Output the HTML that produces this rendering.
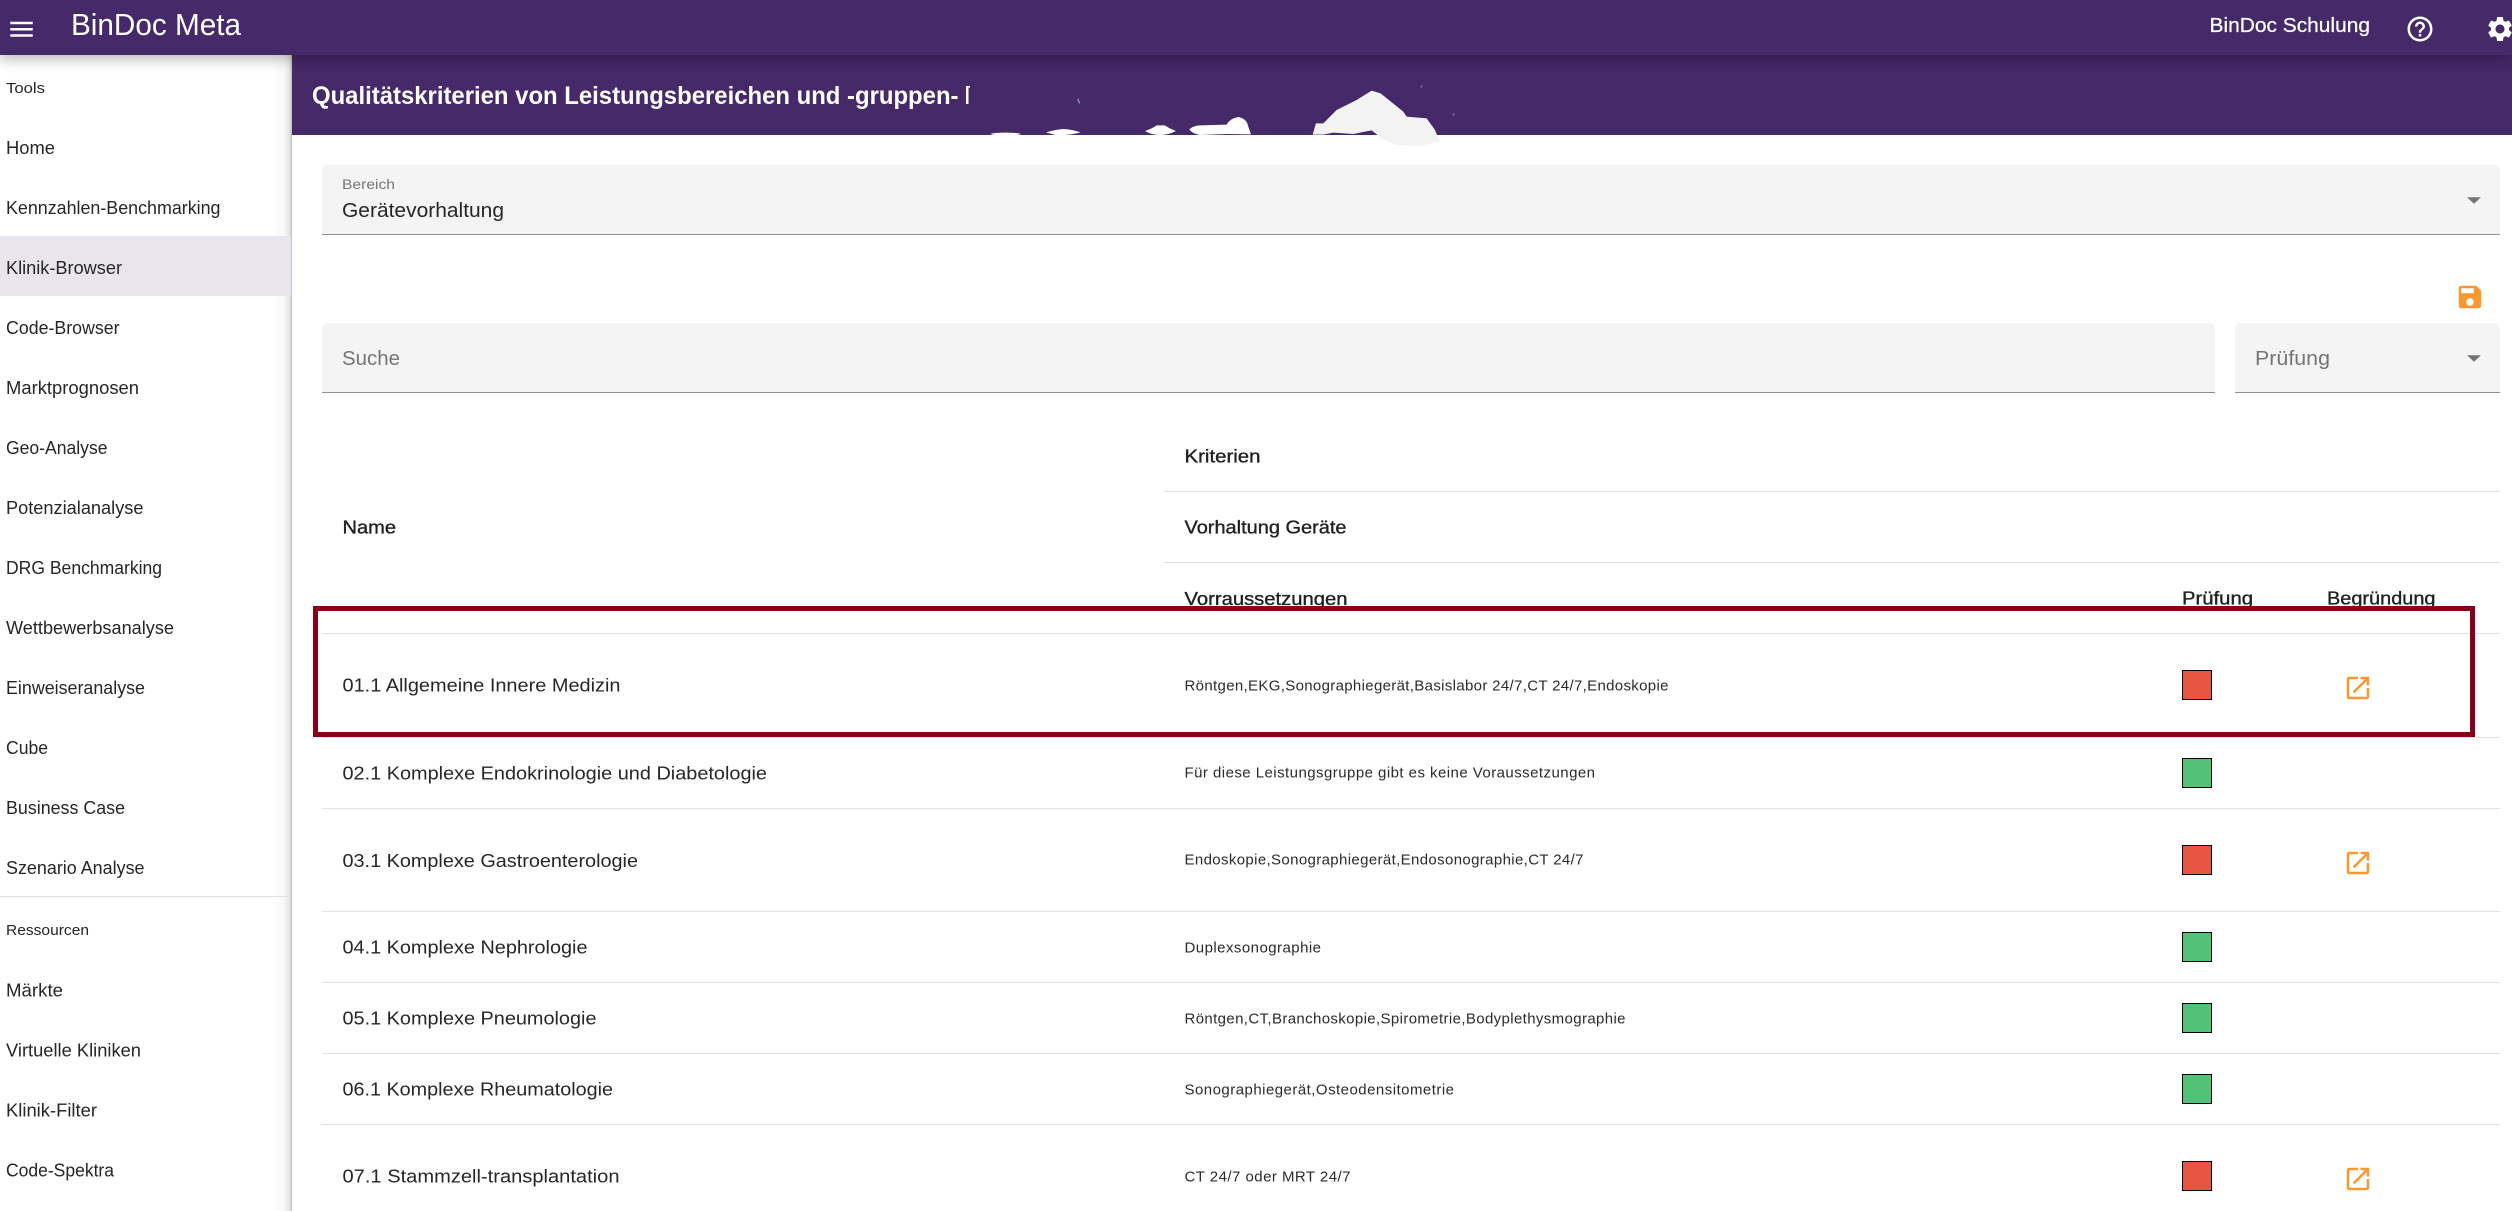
<!DOCTYPE html>
<html lang="de">
<head>
<meta charset="utf-8">
<title>BinDoc Meta</title>
<style>
html,body{margin:0;padding:0;width:2512px;height:1211px;overflow:hidden;background:#fff;font-family:"Liberation Sans",sans-serif}
.abs{position:absolute}
#sidebar{left:0;top:55px;width:291.5px;height:1156px;background:linear-gradient(to right,rgba(0,0,0,0) 272px,rgba(0,0,0,.03) 284px,rgba(0,0,0,.10) 289.5px,rgba(0,0,0,.24) 291.5px)}
#active{left:0;top:236px;width:291px;height:60px;background:#e8e5ec}
#divider{left:0;top:896px;width:290px;height:1.25px;background:#e0e0e0}
#subbar{left:292px;top:55px;width:2220px;height:80px;background:#452969;overflow:hidden}
#topbar{left:0;top:0;width:2512px;height:55px;background:#452969;box-shadow:0 3px 14px rgba(0,0,0,.32)}
.field{background:#f4f4f4;border-bottom:1.25px solid #8f8f8f;border-radius:5px 5px 0 0;box-sizing:border-box}
.line{height:1.25px;background:#e2e2e2}
.sq{width:30px;height:30px;box-sizing:border-box;border:1.25px solid #000;left:2182px}
.r{background:#e85642}.g{background:#52c278}
#redbox{left:313px;top:606px;width:2162px;height:131px;box-sizing:border-box;border:5px solid #880018}
svg{position:absolute;left:0;top:0;overflow:visible}
text{font-family:"Liberation Sans",sans-serif;fill:#262626}
.n{font-size:18px}
.c{font-size:15px;fill:#2b2b2b}
.h{font-size:18px;stroke:#212121;stroke-width:.35px;fill:#212121}
.w{fill:#fff}
.m{fill:#757575}
.o{fill:#f9982f}
</style>
</head>
<body>
<div class="abs" id="sidebar"></div>
<div class="abs" id="active"></div>
<div class="abs" id="divider"></div>
<div class="abs" id="subbar"></div>
<div class="abs" id="topbar"></div>

<div class="abs field" style="left:322px;top:165px;width:2177.5px;height:70px"></div>
<div class="abs field" style="left:322px;top:323px;width:1892.5px;height:70px"></div>
<div class="abs field" style="left:2235px;top:323px;width:264.5px;height:70px"></div>

<div class="abs line" style="left:1164px;top:491px;width:1336px"></div>
<div class="abs line" style="left:1164px;top:562px;width:1336px"></div>
<div class="abs line" style="left:322px;top:633px;width:2178px"></div>
<div class="abs line" style="left:322px;top:737px;width:2178px"></div>
<div class="abs line" style="left:322px;top:808px;width:2178px"></div>
<div class="abs line" style="left:322px;top:911px;width:2178px"></div>
<div class="abs line" style="left:322px;top:982px;width:2178px"></div>
<div class="abs line" style="left:322px;top:1053px;width:2178px"></div>
<div class="abs line" style="left:322px;top:1124px;width:2178px"></div>

<div class="abs sq r" style="top:670px"></div>
<div class="abs sq g" style="top:758px"></div>
<div class="abs sq r" style="top:845px"></div>
<div class="abs sq g" style="top:932px"></div>
<div class="abs sq g" style="top:1003px"></div>
<div class="abs sq g" style="top:1074px"></div>
<div class="abs sq r" style="top:1161px"></div>

<svg width="2512" height="1211" viewBox="0 0 2512 1211">
  <!-- top bar -->
  <g transform="translate(6.5,14.2) scale(1.25)" fill="#fff"><path d="M3 18h18v-2H3v2zm0-5h18v-2H3v2zm0-7v2h18V6H3z"/></g>
  <text x="71" y="35" font-size="31" class="w" textLength="170" lengthAdjust="spacingAndGlyphs">BinDoc Meta</text>
  <text x="2209.5" y="32" font-size="20" class="w" textLength="160.5" lengthAdjust="spacingAndGlyphs" stroke="#fff" stroke-width=".25">BinDoc Schulung</text>
  <g transform="translate(2405,14) scale(1.25)" fill="#fff"><path d="M11 18h2v-2h-2v2zm1-16C6.48 2 2 6.48 2 12s4.48 10 10 10 10-4.48 10-10S17.52 2 12 2zm0 18c-4.41 0-8-3.59-8-8s3.59-8 8-8 8 3.59 8 8-3.59 8-8 8zm0-14c-2.21 0-4 1.79-4 4h2c0-1.1.9-2 2-2s2 .9 2 2c0 2-3 1.75-3 5h2c0-2.25 3-2.5 3-5 0-2.21-1.79-4-4-4z"/></g>
  <g transform="translate(2485,14) scale(1.25)" fill="#fff"><path d="M19.14 12.94c.04-.3.06-.61.06-.94 0-.32-.02-.64-.07-.94l2.03-1.58c.18-.14.23-.41.12-.61l-1.92-3.32c-.12-.22-.37-.29-.59-.22l-2.39.96c-.5-.38-1.03-.7-1.62-.94l-.36-2.54c-.04-.24-.24-.41-.48-.41h-3.84c-.24 0-.43.17-.47.41l-.36 2.54c-.59.24-1.13.57-1.62.94l-2.39-.96c-.22-.08-.47 0-.59.22L2.74 8.87c-.12.21-.08.47.12.61l2.03 1.58c-.05.3-.09.63-.09.94s.02.64.07.94l-2.03 1.58c-.18.14-.23.41-.12.61l1.92 3.32c.12.22.37.29.59.22l2.39-.96c.5.38 1.03.7 1.62.94l.36 2.54c.05.24.24.41.48.41h3.84c.24 0 .44-.17.47-.41l.36-2.54c.59-.24 1.13-.56 1.62-.94l2.39.96c.22.08.47 0 .59-.22l1.92-3.32c.12-.22.07-.47-.12-.61l-2.01-1.58zM12 15.6c-1.98 0-3.6-1.62-3.6-3.6s1.62-3.6 3.6-3.6 3.6 1.62 3.6 3.6-1.62 3.6-3.6 3.6z"/></g>

  <!-- sub bar title and artefacts -->
  <text x="312" y="104" font-size="25" font-weight="700" class="w" textLength="646.5" lengthAdjust="spacingAndGlyphs">Qualitätskriterien von Leistungsbereichen und -gruppen-</text>
  <rect x="966" y="86" width="2.5" height="18" fill="#fff"/><rect x="966" y="86" width="4" height="1.5" fill="#fff"/>
  <path d="M1078 98l2 5-1 .5-1.5-4z" fill="#7fc4e8"/>
  <g transform="translate(960,70) scale(.3333)">
    <ellipse cx="137" cy="192" rx="45" ry="4" fill="#fff"/>
    <path d="M258 187Q290 178 310 177 335 178 362 187 335 194 310 195H285Z" fill="#fff"/>
    <path d="M555 183Q580 174 590 166H615Q625 174 648 183 625 195 600 195 575 195 555 183Z" fill="#fff"/>
    <path d="M688 178Q700 167 720 166L800 164Q810 145 835 141 860 145 865 170L873 193 800 192 720 195Q695 190 688 178Z" fill="#fff"/>
    <path d="M1058 194L1068 160H1090L1130 120 1190 90 1235 62 1262 70 1330 125 1340 140 1400 145 1425 180 1440 215 1380 228 1310 225 1265 205 1235 181 1215 185 1180 192 1120 188 1090 194Z" fill="#f3f3f3"/>
    <path d="M1380 52l5-8 3 8zM1476 136l5-8 3 8z" fill="#a5638f"/>
  </g>

  <!-- sidebar -->
  <text x="6" y="93" font-size="15" textLength="39" lengthAdjust="spacingAndGlyphs">Tools</text>
  <text class="n" x="6" y="153.8" textLength="49" lengthAdjust="spacingAndGlyphs">Home</text>
  <text class="n" x="6" y="213.8" textLength="214.5" lengthAdjust="spacingAndGlyphs">Kennzahlen-Benchmarking</text>
  <text class="n" x="6" y="273.8" textLength="116" lengthAdjust="spacingAndGlyphs">Klinik-Browser</text>
  <text class="n" x="6" y="333.8" textLength="113.5" lengthAdjust="spacingAndGlyphs">Code-Browser</text>
  <text class="n" x="6" y="393.8" textLength="133" lengthAdjust="spacingAndGlyphs">Marktprognosen</text>
  <text class="n" x="6" y="453.8" textLength="101.5" lengthAdjust="spacingAndGlyphs">Geo-Analyse</text>
  <text class="n" x="6" y="513.8" textLength="137.5" lengthAdjust="spacingAndGlyphs">Potenzialanalyse</text>
  <text class="n" x="6" y="573.8" textLength="156" lengthAdjust="spacingAndGlyphs">DRG Benchmarking</text>
  <text class="n" x="6" y="633.8" textLength="168" lengthAdjust="spacingAndGlyphs">Wettbewerbsanalyse</text>
  <text class="n" x="6" y="693.8" textLength="139" lengthAdjust="spacingAndGlyphs">Einweiseranalyse</text>
  <text class="n" x="6" y="753.8" textLength="42" lengthAdjust="spacingAndGlyphs">Cube</text>
  <text class="n" x="6" y="813.8" textLength="119" lengthAdjust="spacingAndGlyphs">Business Case</text>
  <text class="n" x="6" y="873.8" textLength="138.5" lengthAdjust="spacingAndGlyphs">Szenario Analyse</text>
  <text x="6" y="935" font-size="15" textLength="83" lengthAdjust="spacingAndGlyphs">Ressourcen</text>
  <text class="n" x="6" y="996.3" textLength="57" lengthAdjust="spacingAndGlyphs">Märkte</text>
  <text class="n" x="6" y="1056.3" textLength="135" lengthAdjust="spacingAndGlyphs">Virtuelle Kliniken</text>
  <text class="n" x="6" y="1116.3" textLength="91" lengthAdjust="spacingAndGlyphs">Klinik-Filter</text>
  <text class="n" x="6" y="1176.3" textLength="108" lengthAdjust="spacingAndGlyphs">Code-Spektra</text>

  <!-- form fields -->
  <text x="342" y="189" font-size="13.5" class="m" textLength="53" lengthAdjust="spacingAndGlyphs">Bereich</text>
  <text x="342" y="217" font-size="20" fill="#333" textLength="162" lengthAdjust="spacingAndGlyphs">Gerätevorhaltung</text>
  <path d="M2467 197.3h14l-7 6.5z" fill="#757575"/>
  <g transform="translate(2455,282) scale(1.25)" class="o"><path d="M17 3H5c-1.11 0-2 .9-2 2v14c0 1.1.89 2 2 2h14c1.1 0 2-.9 2-2V7l-4-4zm-5 16c-1.66 0-3-1.34-3-3s1.34-3 3-3 3 1.34 3 3-1.34 3-3 3zm3-10H5V5h10v4z"/></g>
  <text x="342" y="365" font-size="20" class="m" textLength="58" lengthAdjust="spacingAndGlyphs">Suche</text>
  <text x="2255" y="365" font-size="20" class="m" textLength="75" lengthAdjust="spacingAndGlyphs">Prüfung</text>
  <path d="M2467 355.3h14l-7 6.5z" fill="#757575"/>

  <!-- table head -->
  <text class="h" x="1184.5" y="462.5" textLength="76" lengthAdjust="spacingAndGlyphs">Kriterien</text>
  <text class="h" x="1184.5" y="533.7" textLength="162" lengthAdjust="spacingAndGlyphs">Vorhaltung Geräte</text>
  <text class="h" x="1184.5" y="604.8" textLength="163" lengthAdjust="spacingAndGlyphs">Vorraussetzungen</text>
  <text class="h" x="342.5" y="533.7" textLength="53.5" lengthAdjust="spacingAndGlyphs">Name</text>
  <text class="h" x="2182" y="604.5" textLength="71" lengthAdjust="spacingAndGlyphs">Prüfung</text>
  <text class="h" x="2327" y="604.5" textLength="108.5" lengthAdjust="spacingAndGlyphs">Begründung</text>

  <!-- rows -->
  <text class="n" x="342.5" y="691.5" textLength="278" lengthAdjust="spacingAndGlyphs">01.1 Allgemeine Innere Medizin</text>
  <text class="n" x="342.5" y="779.5" textLength="424.5" lengthAdjust="spacingAndGlyphs">02.1 Komplexe Endokrinologie und Diabetologie</text>
  <text class="n" x="342.5" y="866.8" textLength="295.5" lengthAdjust="spacingAndGlyphs">03.1 Komplexe Gastroenterologie</text>
  <text class="n" x="342.5" y="953.5" textLength="245" lengthAdjust="spacingAndGlyphs">04.1 Komplexe Nephrologie</text>
  <text class="n" x="342.5" y="1024.5" textLength="254" lengthAdjust="spacingAndGlyphs">05.1 Komplexe Pneumologie</text>
  <text class="n" x="342.5" y="1095.5" textLength="270.5" lengthAdjust="spacingAndGlyphs">06.1 Komplexe Rheumatologie</text>
  <text class="n" x="342.5" y="1182.5" textLength="277" lengthAdjust="spacingAndGlyphs">07.1 Stammzell-transplantation</text>

  <text class="c" x="1184.5" y="690.5" textLength="484">Röntgen,EKG,Sonographiegerät,Basislabor 24/7,CT 24/7,Endoskopie</text>
  <text class="c" x="1184.5" y="777.5" textLength="410.5">Für diese Leistungsgruppe gibt es keine Voraussetzungen</text>
  <text class="c" x="1184.5" y="864.5" textLength="399">Endoskopie,Sonographiegerät,Endosonographie,CT 24/7</text>
  <text class="c" x="1184.5" y="952.5" textLength="136.5">Duplexsonographie</text>
  <text class="c" x="1184.5" y="1023.5" textLength="441">Röntgen,CT,Branchoskopie,Spirometrie,Bodyplethysmographie</text>
  <text class="c" x="1184.5" y="1094.5" textLength="269.5">Sonographiegerät,Osteodensitometrie</text>
  <text class="c" x="1184.5" y="1181.5" textLength="166">CT 24/7 oder MRT 24/7</text>

  <!-- open icons -->
  <g class="o"><path transform="translate(2343,673) scale(1.25)" d="M19 19H5V5h7V3H5c-1.11 0-2 .9-2 2v14c0 1.1.89 2 2 2h14c1.1 0 2-.9 2-2v-7h-2v7zM14 3v2h3.59l-9.83 9.83 1.41 1.41L19 6.41V10h2V3h-7z"/></g>
  <g class="o"><path transform="translate(2343,848) scale(1.25)" d="M19 19H5V5h7V3H5c-1.11 0-2 .9-2 2v14c0 1.1.89 2 2 2h14c1.1 0 2-.9 2-2v-7h-2v7zM14 3v2h3.59l-9.83 9.83 1.41 1.41L19 6.41V10h2V3h-7z"/></g>
  <g class="o"><path transform="translate(2343,1164) scale(1.25)" d="M19 19H5V5h7V3H5c-1.11 0-2 .9-2 2v14c0 1.1.89 2 2 2h14c1.1 0 2-.9 2-2v-7h-2v7zM14 3v2h3.59l-9.83 9.83 1.41 1.41L19 6.41V10h2V3h-7z"/></g>
</svg>

<div class="abs" id="redbox"></div>
</body>
</html>
